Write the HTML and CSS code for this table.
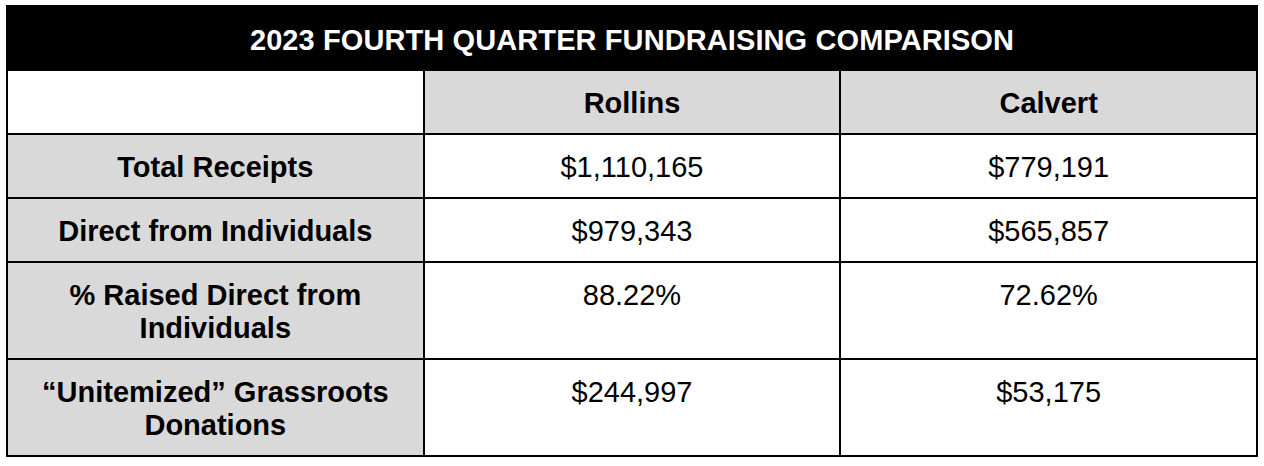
FILE: index.html
```html
<!DOCTYPE html>
<html lang="en">
<head>
<meta charset="utf-8">
<title>2023 Fourth Quarter Fundraising Comparison</title>
<link rel="stylesheet" href="styles.css">
</head>
<body>
<table class="cmp">
  <colgroup>
    <col class="c">
    <col class="c">
    <col class="c">
  </colgroup>
  <thead>
    <tr>
      <th class="title" colspan="3">2023 FOURTH QUARTER FUNDRAISING COMPARISON</th>
    </tr>
    <tr>
      <th class="blank"></th>
      <th class="head">Rollins</th>
      <th class="head">Calvert</th>
    </tr>
  </thead>
  <tbody>
    <tr>
      <th class="label">Total Receipts</th>
      <td class="val">$1,110,165</td>
      <td class="val">$779,191</td>
    </tr>
    <tr>
      <th class="label">Direct from Individuals</th>
      <td class="val">$979,343</td>
      <td class="val">$565,857</td>
    </tr>
    <tr>
      <th class="label">% Raised Direct from<br>Individuals</th>
      <td class="val">88.22%</td>
      <td class="val">72.62%</td>
    </tr>
    <tr>
      <th class="label">“Unitemized” Grassroots<br>Donations</th>
      <td class="val">$244,997</td>
      <td class="val">$53,175</td>
    </tr>
  </tbody>
</table>
</body>
</html>
```
FILE: styles.css
```css
html, body {
  margin: 0;
  padding: 0;
  background: #ffffff;
}

body {
  padding: 5px 6px;
  font-family: "Liberation Sans", Arial, sans-serif;
  color: #000000;
}

.cmp {
  width: 1252px;
  border-collapse: collapse;
  table-layout: fixed;
  border: 2px solid #000000;
}

.cmp .c {
  width: 33.333%;
}

.cmp th,
.cmp td {
  border: 2px solid #000000;
  padding: 16px 8px 13px;
  font-size: 29px;
  line-height: 33px;
  text-align: center;
  vertical-align: top;
}

.cmp .title {
  background: #000000;
  color: #ffffff;
  font-weight: bold;
  letter-spacing: 0.1px;
  padding-top: 17px;
  padding-bottom: 12px;
}

.cmp .blank {
  background: #ffffff;
}

.cmp .head,
.cmp .label {
  background: #d9d9d9;
  font-weight: bold;
}

.cmp .val {
  background: #ffffff;
  font-weight: normal;
}
```
